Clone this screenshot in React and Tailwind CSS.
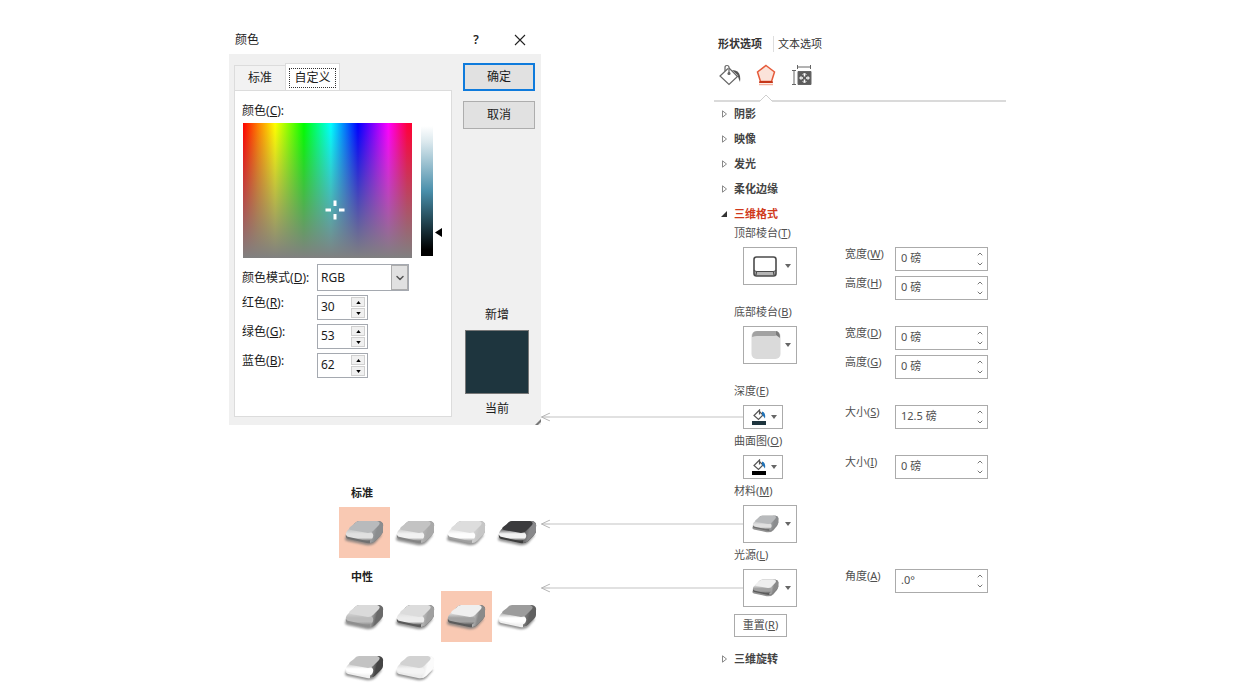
import React, { useId, useState } from 'react';
import { ChevronDown, ChevronUp } from 'lucide-react';

const RGB_FIELDS = [
  { id: 'red', label: '红色', accessKey: 'R', value: '30' },
  { id: 'green', label: '绿色', accessKey: 'G', value: '53' },
  { id: 'blue', label: '蓝色', accessKey: 'B', value: '62' },
];

const MATERIALS = {
  matte: { top: '#b8babc', front: '#e0e0e0', edge: '#707070', side: '#8b8d8f' },
  plastic: { top: '#c3c3c3', front: '#f2f2f2', edge: '#858585', side: '#a9a9a9' },
  metal: { top: '#dddddd', front: '#fdfdfd', edge: '#a0a0a0', side: '#c6c6c6' },
  dark: { top: '#3b3b3d', front: '#f2f2f2', edge: '#3c3c3c', side: '#88888a' },
  threePoint: { top: '#dadada', front: '#bcbcbc', edge: '#8f8f8f', side: '#6a6a6a' },
  balance: { top: '#dcdcdc', front: '#ececec', edge: '#5a5a5a', side: '#a0a0a0' },
  soft: { top: '#efefef', front: '#a3a3a3', edge: '#5b5b5b', side: '#8a8a8a' },
  harsh: { top: '#9c9c9c', front: '#ffffff', edge: '#f1f1f1', side: '#606060' },
  flood: { top: '#c3c3c3', front: '#ffffff', edge: '#f1f1f1', side: '#454545' },
  contrast: { top: '#d2d2d2', front: '#f4f4f4', edge: '#ececec', side: '#fbfbfb' },
};

const STANDARD = ['matte', 'plastic', 'metal', 'dark'];
const NEUTRAL = ['threePoint', 'balance', 'soft', 'harsh', 'flood', 'contrast'];

const Key = ({ text, letter, colon }) => (
  <>
    {text}(<span className="underline">{letter}</span>){colon && ':'}
  </>
);

// Rounded 3D tile used by the material and lighting galleries
const Bevel = ({ kind, className }) => {
  const id = useId();
  const { top, front, edge, side } = MATERIALS[kind];
  return (
    <svg viewBox="4 9 44 34" className={className} aria-hidden="true">
      <defs>
        <linearGradient id={`${id}front`} x1="0" y1="0" x2="0" y2="1">
          <stop offset="0" stopColor={top} />
          <stop offset="0.45" stopColor={front} />
          <stop offset="0.75" stopColor={front} />
          <stop offset="1" stopColor={edge} />
        </linearGradient>
        <linearGradient id={`${id}side`} x1="0" y1="0" x2="1" y2="0.4">
          <stop offset="0" stopColor={top} />
          <stop offset="0.6" stopColor={side} />
          <stop offset="1" stopColor={side} />
        </linearGradient>
        <filter id={`${id}blur`} x="-20%" y="-30%" width="140%" height="160%">
          <feGaussianBlur stdDeviation="0.8" />
        </filter>
        <filter id={`${id}soft`} x="-10%" y="-10%" width="120%" height="120%">
          <feGaussianBlur stdDeviation="0.4" />
        </filter>
      </defs>
      <path d="M8 28Q4 33 8 34L27 38Q33 39 37 35L43 28L30 24Z" fill="#777" opacity="0.8" filter={`url(#${id}blur)`} />
      <g filter={`url(#${id}soft)`}>
        <path d="M7 27L16 16Q18 14 21 14H40Q45 15 44 20V24Q44 26 42 28L36 34Q33 37 28 36L9 32Q6 31 7 27Z" fill={edge} />
        <path d="M36 14H40Q45 15 44 20V24Q44 26 42 28L36 34Q34 36 31 36V27Z" fill={`url(#${id}side)`} />
        <path d="M11 21Q6 25 7 28Q8 30 10 30L28 34Q33 34 34 30Q35 27 32 25Z" fill={`url(#${id}front)`} />
        <path d="M15 17Q17 14 20 14H38Q42 15 40 18L34 24Q32 26 29 26L12 23Q9 22 11 20Z" fill={top} />
      </g>
    </svg>
  );
};

const DialogSpinner = ({ id, label, accessKey, value }) => {
  const [current, setCurrent] = useState(value);
  const step = (n) => setCurrent(String(Math.min(255, Math.max(0, Number(current) + n))));
  return (
    <div className="flex items-start">
      <label htmlFor={id} className="w-[75px] leading-4">
        <Key text={label} letter={accessKey} colon />
      </label>
      <div className="flex h-[25px] w-[51px] border border-[#a5a9b0] bg-white pr-0.5">
        <input
          id={id}
          value={current}
          onChange={(e) => setCurrent(e.target.value)}
          className="w-0 min-w-0 flex-1 pb-0.5 pl-[3px] outline-none"
        />
        <div className="my-px flex w-[14px] flex-col gap-px">
          <button aria-label={`${label}+`} onClick={() => step(1)} className="flex flex-1 items-center justify-center border border-[#d0d0d0] bg-[#f0f0f0]">
            <svg viewBox="0 0 6 4" className="h-[3px] w-[5px]"><path d="M0 4L3 0L6 4Z" /></svg>
          </button>
          <button aria-label={`${label}-`} onClick={() => step(-1)} className="flex flex-1 items-center justify-center border border-[#d0d0d0] bg-[#f0f0f0]">
            <svg viewBox="0 0 6 4" className="h-[3px] w-[5px]"><path d="M0 0L3 4L6 0Z" /></svg>
          </button>
        </div>
      </div>
    </div>
  );
};

const ColorDialog = () => (
  <section className="bg-[#f0f0f0] text-xs text-[#1c1c1c]">
    <header className="flex h-8 items-center bg-white pl-1.5 pt-[3px]">
      <h1 className="flex-1">颜色</h1>
      <button aria-label="帮助" className="w-5 text-xs font-semibold">?</button>
      <button aria-label="关闭" className="ml-[27px] mr-[15px] flex w-[13px] justify-center">
        <svg viewBox="0 0 12 12" className="h-3 w-3" fill="none" stroke="#222" strokeWidth="1.1"><path d="M1 1L11 11M11 1L1 11" /></svg>
      </button>
    </header>

    <div className="relative flex gap-[11px] px-[5px] pb-2 pt-[9px]">
      <div className="flex w-[218px] flex-col">
        <div role="tablist" className="flex items-end">
          <button role="tab" aria-selected="false" className="h-[25px] w-[51px] border-l border-t border-[#dcdcdc] bg-[#f2f2f2]">标准</button>
          <button role="tab" aria-selected="true" className="-mb-px flex h-7 w-[55px] items-center justify-center border border-b-0 border-[#dcdcdc] bg-white">
            <span className="border border-dotted border-[#333] px-1 py-px">自定义</span>
          </button>
        </div>
        <div className="flex-1 border border-[#dcdcdc] bg-white pb-[38px] pl-[7px] pt-3">
          <p className="leading-4"><Key text="颜色" letter="C" colon /></p>
          <div className="mt-1 flex items-start pl-px">
            <div className="relative h-[135px] w-[169px] bg-[linear-gradient(90deg,#ff0000_0%,#ff8000_9%,#ffff00_19%,#00ff00_36%,#00ffff_52%,#0000ff_68%,#ff00ff_86%,#ff0040_97%,#ff0030_100%)]">
              <div className="h-full bg-[linear-gradient(180deg,rgba(128,128,128,0),#808080)]" />
              <svg viewBox="0 0 20 20" className="absolute left-[82px] top-[77px] h-5 w-5" stroke="#fff" strokeWidth="3">
                <path d="M10 0.5V6M10 14V19.5M0.5 10H6M14 10H19.5" />
              </svg>
            </div>
            <div className="ml-[9px] mt-[3px] h-[130px] w-3 bg-[linear-gradient(180deg,#ffffff_0%,#dce9ee_12%,#4a8fab_50%,#28505f_70%,#000000_95%)]" />
            <svg viewBox="0 0 7 9" className="ml-0.5 mt-[105px] h-[9px] w-[7px]"><path d="M0 4.5L7 0V9Z" /></svg>
          </div>
          <div className="mt-1.5 flex items-center">
            <label htmlFor="mode" className="w-[75px]"><Key text="颜色模式" letter="D" colon /></label>
            <div className="relative h-[27px] w-[92px] border border-[#a5a9b0]">
              <select id="mode" className="h-full w-full appearance-none bg-white pl-[3px] outline-none">
                <option>RGB</option>
                <option>HSL</option>
              </select>
              <span className="pointer-events-none absolute inset-y-0 right-0 flex w-[17px] items-center justify-center border border-[#adadad] bg-[#e1e1e1]">
                <ChevronDown size={12} strokeWidth={3} color="#555" />
              </span>
            </div>
          </div>
          <div className="mt-1 flex flex-col gap-1">
            {RGB_FIELDS.map((field) => <DialogSpinner key={field.id} {...field} />)}
          </div>
        </div>
      </div>

      <div className="flex flex-1 flex-col items-start">
        <button className="h-7 w-[72px] border-2 border-[#0f7bdc] bg-[#e1e1e1]">确定</button>
        <button className="mt-[10px] h-7 w-[72px] border border-[#adadad] bg-[#e1e1e1]">取消</button>
        <div className="mt-auto flex w-[68px] flex-col items-center leading-4">
          <span>新增</span>
          <div className="my-[7px] h-16 w-16 border border-[#777] bg-[#1e353e]" />
          <span>当前</span>
        </div>
      </div>
      <svg viewBox="0 0 6 6" className="absolute bottom-0 right-0 h-1.5 w-1.5"><path d="M0 6L6 0V3L3 6Z" fill="#777" /></svg>
    </div>
  </section>
);

const Gallery = ({ title, items, selected }) => (
  <section>
    <h2 className="pl-3 text-[11px] font-bold leading-4 text-[#222]">{title}</h2>
    <div className="mt-1.5 grid grid-cols-[repeat(4,51px)]">
      {items.map((kind) => (
        <button
          key={kind}
          aria-label={kind}
          className={`flex h-[51px] items-center justify-center ${kind === selected ? 'bg-[#f9c9b3]' : ''}`}
        >
          <Bevel kind={kind} className="h-[34px] w-11" />
        </button>
      ))}
    </div>
  </section>
);

const PanelSpinner = ({ id, text, letter, value }) => {
  const [current, setCurrent] = useState(value);
  return (
    <div className="flex items-start">
      <label htmlFor={id} className="w-[50px] leading-[14px]"><Key text={text} letter={letter} /></label>
      <div className="flex h-6 w-[93px] border border-[#ababab] bg-white">
        <input
          id={id}
          value={current}
          onChange={(e) => setCurrent(e.target.value)}
          className="w-0 min-w-0 flex-1 pb-0.5 pl-[5px] outline-none"
        />
        <div className="flex w-[14px] flex-col items-center justify-between py-0.5 text-[#777]">
          <button aria-label={`${text}+`}><ChevronUp size={8} strokeWidth={3} /></button>
          <button aria-label={`${text}-`}><ChevronDown size={8} strokeWidth={3} /></button>
        </div>
      </div>
    </div>
  );
};

const Connector = () => (
  <div className="absolute right-full top-1/2 flex h-[9px] w-[202px] -translate-y-1/2 items-center">
    <svg viewBox="0 0 9 9" className="h-[9px] w-[9px]" fill="none" stroke="#b5b5b5"><path d="M9 0.5L0.5 4.5L9 8.5M0.5 4.5H9" /></svg>
    <div className="h-px flex-1 bg-[#c4c4c4]" />
  </div>
);

const PickerButton = ({ label, small, connected, children }) => (
  <div className={`relative ${small ? 'w-10' : 'w-[54px]'}`}>
    {connected && <Connector />}
    <button
      aria-label={label}
      className={`flex w-full items-center justify-between border border-[#ababab] bg-white pl-[7px] pr-[5px] ${small ? 'h-6' : 'h-[38px]'}`}
    >
      {children}
      <svg viewBox="0 0 6 4" className="h-1 w-1.5"><path d="M0 0H6L3 4Z" fill="#666" /></svg>
    </button>
  </div>
);

const FillIcon = ({ color }) => (
  <svg viewBox="0 0 16 16" className="h-4 w-4" fill="none">
    <path d="M7.5 1.5L12 6L7.5 10.5L3 6.5L8.5 1V5.5" stroke="#555" strokeWidth="1.2" />
    <path d="M11 2.5Q15 3.500 14 9.500Q12.500 7.500 11 5.500Z" fill="#1f72b8" />
    <path d="M1 12H15V16H1Z" fill={color} />
  </svg>
);

const TopBevelIcon = () => (
  <svg viewBox="0 0 28 28" className="h-7 w-7" fill="none">
    <path d="M3 19H25V22Q25 24 23 24H5Q3 24 3 22Z" fill="#b5b5b5" />
    <rect x="3" y="5" width="22" height="19" rx="2.5" stroke="#4b4b4b" strokeWidth="1.6" />
    <path d="M3 18Q4 19.500 6 19.500H22Q24 19.500 25 18M5.500 20L5 23M22.500 20L23 23" stroke="#4b4b4b" strokeWidth="1.2" />
  </svg>
);

const BottomBevelIcon = () => (
  <svg viewBox="0 0 30 30" className="h-[30px] w-[30px]">
    <rect x="0.5" y="1" width="29" height="28" rx="5" fill="#dadada" />
    <path d="M1 7Q1 1 6 1H24Q29 1 29 7L26 5Q25 6 23 6H6Q4 6 1 7Z" fill="#a2a2a2" />
    <path d="M25 1Q29 2 29 8L25 5Z" fill="#7b7b7b" />
  </svg>
);

const Field = ({ text, letter, picker, children }) => (
  <div>
    <p className="pb-[7px] pl-5 pt-[5px] leading-[14px]"><Key text={text} letter={letter} /></p>
    <div className="grid grid-cols-[102px_1fr] items-start pl-[29px]">
      {picker}
      <div className="flex flex-col gap-[5px]">{children}</div>
    </div>
  </div>
);

const SectionTitle = ({ children, open }) => (
  <button aria-expanded={!!open} className={`flex items-center text-left font-bold leading-4 ${open ? 'text-[#d0391b]' : 'text-[#444]'}`}>
    <span className="flex w-5 pl-[7px]">
      {open ? (
        <svg viewBox="0 0 7 7" className="h-1.5 w-1.5"><path d="M7 0V7H0Z" fill="#333" /></svg>
      ) : (
        <svg viewBox="0 0 7 8" className="h-2 w-[7px]" fill="none" stroke="#888"><path d="M1.5 0.8L5.5 4L1.5 7.2Z" /></svg>
      )}
    </span>
    {children}
  </button>
);

const FormatPanel = () => (
  <aside className="w-[297px] pr-[5px] pt-[14px] text-[11px] text-[#505050]">
    <div role="tablist" className="flex pl-1 leading-4">
      <button role="tab" aria-selected="true" className="border-r border-[#dedede] pr-[11px] font-bold text-[#333]">形状选项</button>
      <button role="tab" aria-selected="false" className="pl-1 text-[#333]">文本选项</button>
    </div>

    <div className="mt-3 flex gap-3 pl-1">
      <button aria-label="填充与线条">
        <svg viewBox="0 0 24 24" className="h-6 w-6" fill="none" stroke="#666" strokeWidth="1.2">
          <path d="M11 4L19.5 12.5L11 20.5L2 12L10 4.5" />
          <path d="M7 7V3.5Q7 1.5 9 1.5Q11 1.5 11 3.5V9" />
          <circle cx="11" cy="9.5" r="1" fill="#666" />
          <path d="M14 6Q21 6 22 12Q22.500 15 22 18Q20 13 19.500 11Z" fill="#555" stroke="none" />
        </svg>
      </button>
      <button aria-label="效果">
        <svg viewBox="0 0 24 24" className="h-6 w-6" fill="none">
          <path d="M12 1.500L20.500 8L17.500 17.500H6.500L3.500 8Z" fill="#fbe3da" stroke="#e65a3a" strokeWidth="1.5" />
          <path d="M5.500 17H18.500L19 19H5Z" fill="#c5371a" />
          <path d="M5 20.500H19" stroke="#f4b09c" strokeWidth="1.5" />
        </svg>
      </button>
      <button aria-label="大小与属性">
        <svg viewBox="0 0 24 24" className="h-6 w-6" fill="none" stroke="#666">
          <path d="M2 6.500H6M4 6.500V20.500M2 20.500H6M7.500 1V5M7.500 3H20.500M20.500 1V5" />
          <path d="M8 7.500H21V20.500H8Z" fill="#5c5c5c" />
          <path d="M14.500 9.500V12.500M14.500 15.500V18.500M10 14H13M16 14H19" stroke="#fff" strokeWidth="1.500" />
          <path d="M12.500 11L14.500 9L16.500 11M12.500 17L14.500 19L16.500 17M11.500 12L9.500 14L11.500 16M17.500 12L19.500 14L17.500 16" stroke="#fff" strokeWidth="0.800" />
        </svg>
      </button>
    </div>

    <div className="mt-1.5 flex h-2">
      <div className="w-[46px] border-b-2 border-[#dadada]" />
      <svg viewBox="0 0 12 8" className="h-2 w-3" fill="none" stroke="#cfcfcf"><path d="M0 7L6 1L12 7" /></svg>
      <div className="flex-1 border-b-2 border-[#dadada]" />
    </div>

    <div className="mt-1 flex flex-col gap-[9px]">
      <SectionTitle>阴影</SectionTitle>
      <SectionTitle>映像</SectionTitle>
      <SectionTitle>发光</SectionTitle>
      <SectionTitle>柔化边缘</SectionTitle>
      <SectionTitle open>三维格式</SectionTitle>
    </div>

    <div className="-mt-px">
      <Field text="顶部棱台" letter="T" picker={<PickerButton label="顶部棱台"><TopBevelIcon /></PickerButton>}>
        <PanelSpinner id="top-width" text="宽度" letter="W" value="0 磅" />
        <PanelSpinner id="top-height" text="高度" letter="H" value="0 磅" />
      </Field>
      <Field text="底部棱台" letter="B" picker={<PickerButton label="底部棱台"><BottomBevelIcon /></PickerButton>}>
        <PanelSpinner id="bottom-width" text="宽度" letter="D" value="0 磅" />
        <PanelSpinner id="bottom-height" text="高度" letter="G" value="0 磅" />
      </Field>
      <Field text="深度" letter="E" picker={<PickerButton label="深度" small connected><FillIcon color="#1e353e" /></PickerButton>}>
        <PanelSpinner id="depth-size" text="大小" letter="S" value="12.5 磅" />
      </Field>
      <Field text="曲面图" letter="O" picker={<PickerButton label="曲面图" small><FillIcon color="#000" /></PickerButton>}>
        <PanelSpinner id="contour-size" text="大小" letter="I" value="0 磅" />
      </Field>
      <Field text="材料" letter="M" picker={<PickerButton label="材料" connected><Bevel kind="matte" className="h-6 w-[30px]" /></PickerButton>} />
      <Field text="光源" letter="L" picker={<PickerButton label="光源" connected><Bevel kind="soft" className="h-6 w-[30px]" /></PickerButton>}>
        <PanelSpinner id="angle" text="角度" letter="A" value=".0°" />
      </Field>
    </div>

    <button className="ml-5 mt-[7px] block h-[23px] w-[53px] border border-[#ababab] bg-white">
      <Key text="重置" letter="R" />
    </button>
    <div className="mt-[14px] flex">
      <SectionTitle>三维旋转</SectionTitle>
    </div>
  </aside>
);

const App = () => {
  return (
    <main className="flex justify-center gap-[173px] bg-white pt-[22px] font-['Noto_Sans','Noto_Sans_CJK_SC',sans-serif]">
      <div className="w-[312px]">
        <ColorDialog />
        <div className="mt-[60px] flex flex-col gap-[11px] pl-[110px]">
          <Gallery title="标准" items={STANDARD} selected="matte" />
          <Gallery title="中性" items={NEUTRAL} selected="soft" />
        </div>
      </div>
      <FormatPanel />
    </main>
  );
};

export default App;
